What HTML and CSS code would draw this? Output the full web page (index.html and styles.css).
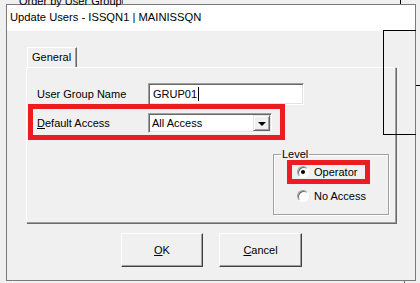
FILE: index.html
```html
<!DOCTYPE html>
<html>
<head>
<meta charset="utf-8">
<link rel="stylesheet" href="styles.css">
</head>
<body>
<div class="bg-text">Order by User Group</div>
<div class="bg-edge bg-edge-a"></div>
<div class="bg-edge bg-edge-b"></div>
<div class="bg-edge bg-edge-c"></div>
<div class="bg-edge bg-edge-d"></div>

<div class="dialog">
  <div class="titlebar">Update Users - ISSQN1 | MAINISSQN</div>
  <div class="content">
    <div class="tabs"><div class="tab">General</div></div>
    <div class="panel">
      <div class="row row-name">
        <span class="label">User Group Name</span>
        <div class="textbox">GRUP01<span class="caret"></span></div>
      </div>
      <div class="row row-access">
        <span class="label"><u>D</u>efault Access</span>
        <div class="combo">
          <span class="combo-text">All Access</span>
          <span class="combo-btn"><span class="arrow"></span></span>
        </div>
      </div>
      <div class="group">
        <span class="legend">Level</span>
        <div class="radio-row"><span class="radio checked"></span><span>Operator</span></div>
        <div class="radio-row"><span class="radio"></span><span>No Access</span></div>
      </div>
    </div>
  </div>
  <div class="buttons">
    <div class="btn btn-ok"><u>O</u>K</div>
    <div class="btn btn-cancel"><u>C</u>ancel</div>
  </div>
</div>

<div class="overlay-box"></div>
<div class="overlay-tick"></div>
<div class="mark mark-access"></div>
<div class="mark mark-operator"></div>
</body>
</html>
```

FILE: styles.css
```css
html, body {
  margin: 0;
  padding: 0;
}
body {
  width: 420px;
  height: 283px;
  overflow: hidden;
  position: relative;
  background: #f0f0f0;
  font-family: "Liberation Sans", Arial, sans-serif;
  font-size: 11px;
  color: #000;
}

/* background window fragments */
.bg-text {
  position: absolute;
  left: 19px;
  top: -5px;
  font-size: 11px;
  line-height: 13px;
}
.bg-edge {
  position: absolute;
}
.bg-edge-a {
  left: 122px;
  top: 0;
  width: 1px;
  height: 4px;
  background: #696969;
}
.bg-edge-b {
  left: 400px;
  top: 0;
  width: 1px;
  height: 4px;
  background: #000;
}
.bg-edge-c {
  left: 12px;
  top: 281px;
  width: 1px;
  height: 2px;
  background: #fff;
}
.bg-edge-d {
  left: 404px;
  top: 281px;
  width: 1px;
  height: 2px;
  background: #696969;
}

/* dialog */
.dialog {
  margin: 4px 0 0 6px;
  width: 410px;
  height: 277px;
  box-sizing: border-box;
  border: 1px solid #7a7a7a;
  background: #f0f0f0;
  display: flex;
  flex-direction: column;
}
.titlebar {
  height: 26px;
  background: #fff;
  padding-left: 3px;
  font-size: 11.2px;
  line-height: 25px;
}
.content {
  padding: 16px 0 0 19px;
}
.tabs {
  display: flex;
  padding-left: 1px;
}
.tab {
  width: 50px;
  height: 20px;
  box-sizing: border-box;
  border-top: 1px solid #fff;
  border-left: 1px solid #fff;
  border-right: 1px solid #696969;
  box-shadow: inset -1px 0 0 #a0a0a0;
  padding-left: 4px;
  line-height: 19px;
}
.panel {
  width: 370px;
  height: 156px;
  box-sizing: border-box;
  border-top: 1px solid #fff;
  border-left: 1px solid #fff;
  border-right: 1px solid #a0a0a0;
  border-bottom: 1px solid #a0a0a0;
  box-shadow: 1px 1px 0 #696969;
  padding: 15px 0 0 10px;
}
.row {
  display: flex;
  align-items: center;
}
.row-name {
  height: 22px;
}
.row-access {
  height: 20px;
  margin-top: 8px;
}
.label {
  width: 111px;
  flex: none;
}
.textbox {
  width: 156px;
  height: 22px;
  box-sizing: border-box;
  background: #fff;
  border-top: 1px solid #a0a0a0;
  border-left: 1px solid #a0a0a0;
  border-right: 1px solid #fff;
  border-bottom: 1px solid #fff;
  box-shadow: inset 1px 1px 0 #696969, inset -1px -1px 0 #e3e3e3;
  padding-left: 4px;
  display: flex;
  align-items: center;
}
.caret {
  width: 1px;
  height: 14px;
  background: #000;
  margin-left: 1px;
}
.combo {
  width: 124px;
  height: 20px;
  box-sizing: border-box;
  background: #fff;
  border-top: 1px solid #a0a0a0;
  border-left: 1px solid #a0a0a0;
  border-right: 1px solid #fff;
  border-bottom: 1px solid #fff;
  box-shadow: inset 1px 1px 0 #696969, inset -1px -1px 0 #e3e3e3;
  display: flex;
  align-items: stretch;
  padding: 1px;
}
.combo-text {
  flex: 1;
  padding-left: 2px;
  line-height: 16px;
}
.combo-btn {
  width: 17px;
  box-sizing: border-box;
  background: #f0f0f0;
  border-top: 1px solid #e3e3e3;
  border-left: 1px solid #e3e3e3;
  border-right: 1px solid #696969;
  border-bottom: 1px solid #696969;
  box-shadow: inset 1px 1px 0 #fff, inset -1px -1px 0 #a0a0a0;
  display: flex;
  align-items: center;
  justify-content: center;
}
.arrow {
  width: 0;
  height: 0;
  border-left: 4px solid transparent;
  border-right: 4px solid transparent;
  border-top: 4px solid #000;
  margin-top: 1px;
}

/* group box */
.group {
  margin: 21px 0 0 236px;
  width: 116px;
  height: 61px;
  box-sizing: border-box;
  border: 1px solid #a0a0a0;
  box-shadow: inset 1px 1px 0 #fff, 1px 1px 0 #fff;
  padding: 0 0 0 23px;
  display: flex;
  flex-direction: column;
}
.legend {
  align-self: flex-start;
  margin: -8px 0 0 -16px;
  padding: 0 1px;
  background: #f0f0f0;
  line-height: 14px;
}
.radio-row {
  display: flex;
  align-items: center;
  height: 16px;
  gap: 5px;
}
.radio-row:first-of-type {
  margin-top: 3px;
}
.radio-row + .radio-row {
  margin-top: 8px;
}
.radio {
  width: 12px;
  height: 12px;
  box-sizing: border-box;
  border-radius: 50%;
  border: 1px solid;
  border-color: #a0a0a0 #fff #fff #a0a0a0;
  background: #fff;
  box-shadow: inset 1px 1px 0 #696969;
  position: relative;
}
.radio.checked::after {
  content: "";
  position: absolute;
  left: 3px;
  top: 3px;
  width: 4px;
  height: 4px;
  border-radius: 50%;
  background: #000;
}

/* buttons */
.buttons {
  display: flex;
  justify-content: center;
  gap: 16px;
  margin-top: 10px;
  padding-left: 1px;
}
.btn {
  width: 82px;
  height: 34px;
  box-sizing: border-box;
  border-top: 1px solid #fff;
  border-left: 1px solid #fff;
  border-right: 1px solid #404040;
  border-bottom: 1px solid #404040;
  box-shadow: inset -1px -1px 0 #a0a0a0;
  display: flex;
  align-items: center;
  justify-content: center;
}
.btn-cancel {
  width: 83px;
}

/* overlays */
.overlay-box {
  position: absolute;
  left: 383px;
  top: 30px;
  width: 32px;
  height: 103px;
  border: 1px solid #000;
  border-right: none;
}
.overlay-tick {
  position: absolute;
  left: 416px;
  top: 85px;
  width: 4px;
  height: 1px;
  background: #000;
}
.mark {
  position: absolute;
  border: 5px solid #ed1c24;
  box-sizing: border-box;
}
.mark-access {
  left: 28px;
  top: 104px;
  width: 257px;
  height: 36px;
}
.mark-operator {
  left: 287px;
  top: 160px;
  width: 83px;
  height: 24px;
}
```
